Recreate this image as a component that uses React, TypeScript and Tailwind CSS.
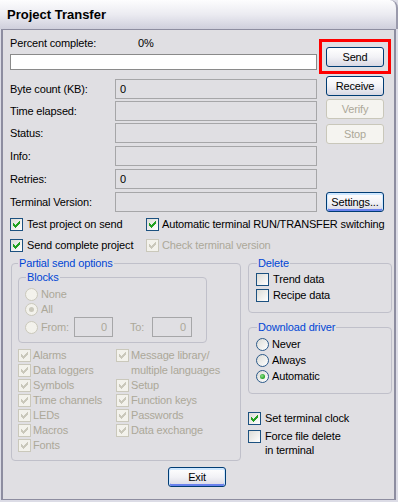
import React from "react";

function Check({ checked = false, disabled = false }: { checked?: boolean; disabled?: boolean }) {
  return (
    <span
      className={
        disabled
          ? "flex w-[13px] h-[13px] shrink-0 border border-[#cac8bb] bg-[#f3f2ec]"
          : "flex w-[13px] h-[13px] shrink-0 border border-[#1c5180] bg-gradient-to-br from-[#dcdcd7] to-white"
      }
    >
      {checked && (
        <svg width="11" height="11" viewBox="0 0 11 11" className="block">
          <path
            fill={disabled ? "#cac8bb" : "#21a121"}
            d="M2 4h1v3H2zM3 5h1v3H3zM4 6h1v3H4zM5 5h1v3H5zM6 4h1v3H6zM7 3h1v3H7zM8 2h1v3H8z"
          />
        </svg>
      )}
    </span>
  );
}

function Radio({ checked = false, disabled = false }: { checked?: boolean; disabled?: boolean }) {
  return (
    <span
      className={
        disabled
          ? "flex items-center justify-center w-[13px] h-[13px] shrink-0 rounded-full border border-[#cac8bb] bg-[#f3f2ec]"
          : "flex items-center justify-center w-[13px] h-[13px] shrink-0 rounded-full border border-[#2c5a8a] bg-gradient-to-br from-[#dcdcd7] to-white"
      }
    >
      {checked && (
        <span
          className={
            disabled
              ? "w-[5px] h-[5px] rounded-full bg-[#cac8bb]"
              : "w-[5px] h-[5px] rounded-full bg-[radial-gradient(circle_at_40%_40%,#8ee08e,#21a121_70%)]"
          }
        />
      )}
    </span>
  );
}

function Btn({
  children,
  disabled = false,
  focus = false,
}: {
  children: React.ReactNode;
  disabled?: boolean;
  focus?: boolean;
}) {
  if (disabled) {
    return (
      <div className="flex items-center justify-center w-[58px] h-[20px] rounded-[3px] border border-[#c9c7ba] bg-[#f5f4f0] text-[#aca899]">
        {children}
      </div>
    );
  }
  return (
    <div
      className={
        focus
          ? "flex items-center justify-center w-[58px] h-[20px] rounded-[3px] border border-[#003c74] bg-gradient-to-b from-white via-[#f2f2f6] to-[#d8d8e4] shadow-[inset_0_1px_0_1px_#cee7ff,inset_0_-1px_0_1px_#6982ee]"
          : "flex items-center justify-center w-[58px] h-[20px] rounded-[3px] border border-[#003c74] bg-gradient-to-b from-white via-[#f2f2f6] to-[#d8d8e4]"
      }
    >
      {children}
    </div>
  );
}

function Box({ value = "", w = "w-[202px]" }: { value?: string; w?: string }) {
  return (
    <div className={`${w} h-[20px] border border-[#a6a6a8] bg-[#e0dfe3] flex items-center pl-[4px]`}>
      {value}
    </div>
  );
}

const rows: { label: string; value?: string; mt: string }[] = [
  { label: "Byte count (KB):", value: "0", mt: "mt-0" },
  { label: "Time elapsed:", mt: "mt-[2px]" },
  { label: "Status:", mt: "mt-[2px]" },
  { label: "Info:", mt: "mt-[3px]" },
  { label: "Retries:", value: "0", mt: "mt-[3px]" },
  { label: "Terminal Version:", mt: "mt-[3px]" },
];

const legend = "text-[#0046d5] px-[1px] leading-[13px]";

export default function App() {
  return (
    <div className="w-[398px] h-[502px] overflow-hidden bg-[#dcdce6] text-black text-[11px] leading-[13px] font-['Liberation_Sans',Arial,sans-serif]">
      {/* title bar */}
      <div className="h-[29px] rounded-tr-[8px] border-r-2 border-[#9a9aac] bg-gradient-to-b from-[#fdfdfe] via-[#ebebf1] to-[#cfcfdc] flex items-center pl-[7px] font-bold text-[13px]">
        Project Transfer
      </div>

      {/* client */}
      <div className="ml-[1px] mr-[2px] h-[471px] border-t border-b border-l-2 border-r-2 border-[#8d8da0] bg-[#e0dfe3] pl-[7px] tracking-[-0.15px]">
        {/* top section */}
        <div className="flex">
          <div className="w-[307px] flex flex-col">
            <div className="mt-[7px] flex h-[13px] items-center">
              <span className="w-[128px]">Percent complete:</span>
              <span>0%</span>
            </div>
            <div className="mt-[4px] h-[16px] border border-[#8a8a8a] bg-white" />
            <div className="mt-[9px] flex flex-col">
              {rows.map((r) => (
                <div key={r.label} className={`${r.mt} flex items-center h-[20px]`}>
                  <span className="w-[105px]">{r.label}</span>
                  <Box value={r.value} />
                </div>
              ))}
            </div>
          </div>
          <div className="ml-[2px] w-[72px] flex flex-col items-center">
            <div className="mt-[9px] border-[3px] border-[#ff0000] pt-[5px] pb-[4px] px-[4px]">
              <Btn>Send</Btn>
            </div>
            <div className="mt-[2px]">
              <Btn>Receive</Btn>
            </div>
            <div className="mt-[3px]">
              <Btn disabled>Verify</Btn>
            </div>
            <div className="mt-[5px]">
              <Btn disabled>Stop</Btn>
            </div>
            <div className="mt-[48px]">
              <Btn focus>Settings...</Btn>
            </div>
          </div>
        </div>

        {/* check rows */}
        <div className="mt-[6px] flex h-[13px] items-center">
          <div className="w-[136px] flex items-center gap-[4px]">
            <Check checked />
            <span>Test project on send</span>
          </div>
          <div className="flex items-center gap-[3px]">
            <Check checked />
            <span>Automatic terminal RUN/TRANSFER switching</span>
          </div>
        </div>
        <div className="mt-[8px] flex h-[13px] items-center">
          <div className="w-[136px] flex items-center gap-[4px]">
            <Check checked />
            <span>Send complete project</span>
          </div>
          <div className="flex items-center gap-[3px] text-[#aca899]">
            <Check checked disabled />
            <span>Check terminal version</span>
          </div>
        </div>

        {/* bottom section */}
        <div className="mt-[5px] flex items-start">
          <fieldset className="ml-[1px] w-[230px] h-[204px] border border-[#c0c0ca] rounded-[4px]">
            <legend className={`ml-[6px] ${legend}`}>Partial send options</legend>
            <fieldset className="mt-[1px] ml-[6px] w-[189px] h-[72px] border border-[#c0c0ca] rounded-[4px]">
              <legend className={`ml-[7px] ${legend}`}>Blocks</legend>
              <div className="mt-[2px] pl-[6px] flex flex-col text-[#aca899]">
                <div className="h-[16px] flex items-center gap-[3px]">
                  <Radio disabled />
                  <span>None</span>
                </div>
                <div className="h-[15px] flex items-center gap-[3px]">
                  <Radio disabled checked />
                  <span>All</span>
                </div>
                <div className="h-[20px] flex items-center">
                  <Radio disabled />
                  <span className="ml-[3px] w-[33px]">From:</span>
                  <div className="w-[39px] h-[20px] border border-[#a6a6a8] flex items-center justify-end pr-[5px]">0</div>
                  <span className="ml-[17px] w-[22px]">To:</span>
                  <div className="w-[40px] h-[20px] border border-[#a6a6a8] flex items-center justify-end pr-[5px]">0</div>
                </div>
              </div>
            </fieldset>
            <div className="mt-[5px] pl-[6px] grid grid-cols-[98px_1fr] auto-rows-[15px] text-[#aca899] leading-[15px]">
              <div className="flex items-center gap-[2px]"><Check checked disabled /><span>Alarms</span></div>
              <div className="row-span-2 flex items-start gap-[2px]">
                <span className="mt-[1px]"><Check checked disabled /></span>
                <span>Message library/<br />multiple languages</span>
              </div>
              <div className="flex items-center gap-[2px]"><Check checked disabled /><span>Data loggers</span></div>
              <div className="flex items-center gap-[2px]"><Check checked disabled /><span>Symbols</span></div>
              <div className="flex items-center gap-[2px]"><Check checked disabled /><span>Setup</span></div>
              <div className="flex items-center gap-[2px]"><Check checked disabled /><span>Time channels</span></div>
              <div className="flex items-center gap-[2px]"><Check checked disabled /><span>Function keys</span></div>
              <div className="flex items-center gap-[2px]"><Check checked disabled /><span>LEDs</span></div>
              <div className="flex items-center gap-[2px]"><Check checked disabled /><span>Passwords</span></div>
              <div className="flex items-center gap-[2px]"><Check checked disabled /><span>Macros</span></div>
              <div className="flex items-center gap-[2px]"><Check checked disabled /><span>Data exchange</span></div>
              <div className="flex items-center gap-[2px]"><Check checked disabled /><span>Fonts</span></div>
            </div>
          </fieldset>

          <div className="ml-[7px] w-[144px] flex flex-col">
            <fieldset className="h-[56px] border border-[#c0c0ca] rounded-[4px]">
              <legend className={`ml-[8px] ${legend}`}>Delete</legend>
              <div className="mt-[1px] pl-[7px] flex flex-col">
                <div className="h-[16px] flex items-center gap-[4px]"><Check /><span>Trend data</span></div>
                <div className="h-[16px] flex items-center gap-[4px]"><Check /><span>Recipe data</span></div>
              </div>
            </fieldset>
            <fieldset className="mt-[8px] h-[73px] border border-[#c0c0ca] rounded-[4px]">
              <legend className={`ml-[8px] ${legend}`}>Download driver</legend>
              <div className="mt-[2px] pl-[7px] flex flex-col">
                <div className="h-[16px] flex items-center gap-[3px]"><Radio /><span>Never</span></div>
                <div className="h-[16px] flex items-center gap-[3px]"><Radio /><span>Always</span></div>
                <div className="h-[16px] flex items-center gap-[3px]"><Radio checked /><span>Automatic</span></div>
              </div>
            </fieldset>
            <div className="mt-[18px] h-[13px] flex items-center gap-[4px]">
              <Check checked />
              <span>Set terminal clock</span>
            </div>
            <div className="mt-[4px] flex items-start gap-[4px] leading-[14px]">
              <span className="mt-[1px]"><Check /></span>
              <span>Force file delete<br />in terminal</span>
            </div>
          </div>
        </div>

        <div className="mt-[6px] ml-[158px]">
          <Btn focus>Exit</Btn>
        </div>
      </div>
    </div>
  );
}
